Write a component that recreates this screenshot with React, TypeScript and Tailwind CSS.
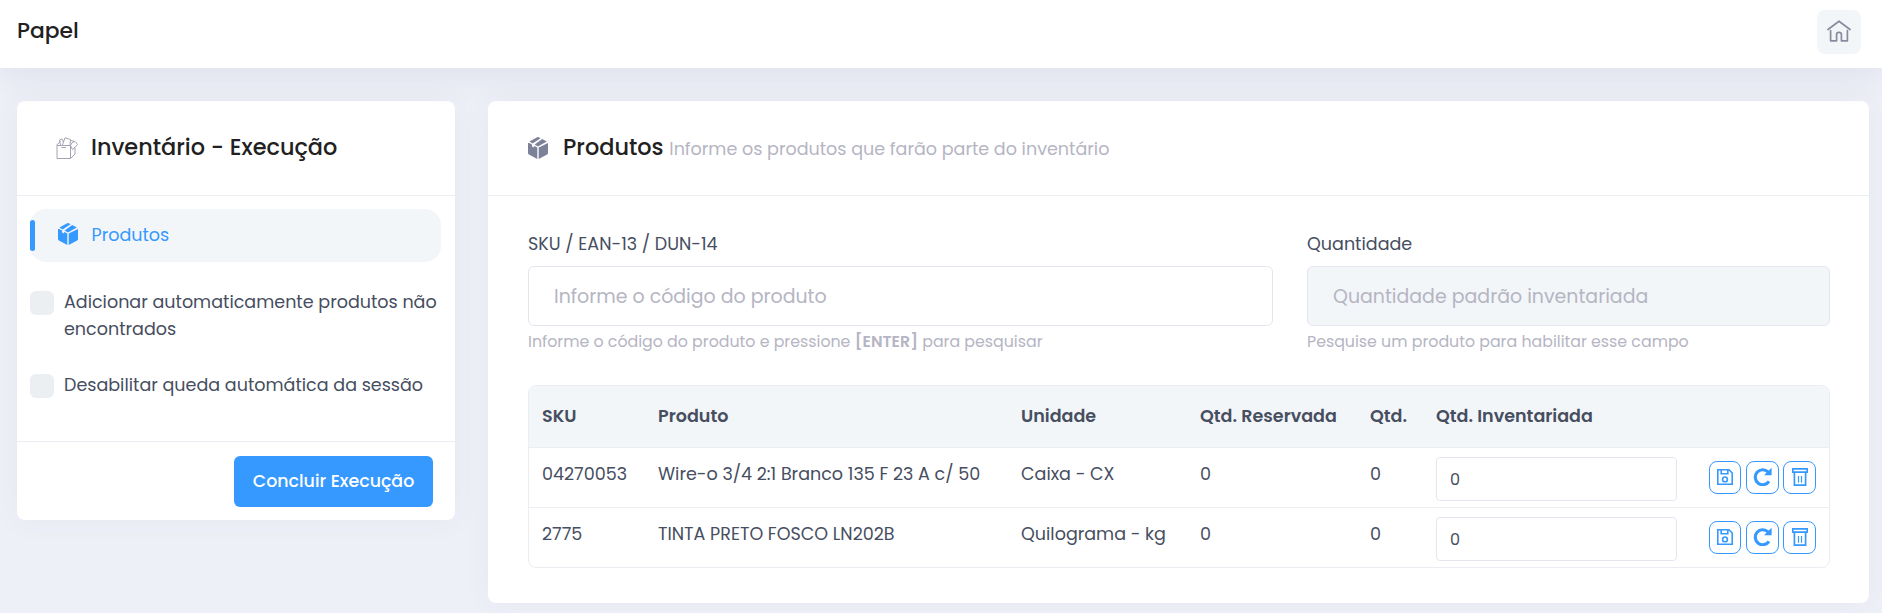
type Produto = {
  sku: string;
  nome: string;
  unidade: string;
  reservada: number;
  qtd: number;
  inventariada: number;
};

const produtos: Produto[] = [
  { sku: "04270053", nome: "Wire-o 3/4 2:1 Branco 135 F 23 A c/ 50", unidade: "Caixa - CX", reservada: 0, qtd: 0, inventariada: 0 },
  { sku: "2775", nome: "TINTA PRETO FOSCO LN202B", unidade: "Quilograma - kg", reservada: 0, qtd: 0, inventariada: 0 },
];

function BoxIcon({ className }: { className?: string }) {
  return (
    <svg viewBox="0 0 20 22" fill="currentColor" className={className}>
      <path d="M0 6 1.2 5.9 4 7.5V9.4L6.2 10.6V8.8L9.3 10.6V22L.9 17.5Q0 17 0 16Z" />
      <path d="M20 5.9V16Q20 17 19.1 17.5L10.7 22V10.6Z" />
      <path d="M1.4 4.6 9.2 .3Q10 -.1 10.8 .3L12.6 1.2 4.6 6.4Z" />
      <path d="M14.2 2 18.8 4.6 10 9.4 6.6 7.4Z" />
    </svg>
  );
}

function OpenBoxIcon({ className }: { className?: string }) {
  return (
    <svg viewBox="0 0 22 22" fill="none" stroke="currentColor" strokeWidth="0.9" className={className}>
      <path d="M1 8.5H14.5V21.5H1Z M14.5 21.5 19 17V10.5 M1 8.5 .8 7.8 4.5 4.5 M14.5 8.5 16.2 5.5 19 4.5 21.5 7.5 19 10.5 16.5 12.5 14.5 8.5 M5.5 10.5H10" />
      <path d="M4.5 8 3.5 3 6 2 7.5 5 9 .8 14.5 2.5 14 8 M7.5 5 6.5 8 M14.5 3.5 18 4.2" />
    </svg>
  );
}

function HomeIcon({ className }: { className?: string }) {
  return (
    <svg viewBox="0 0 24 22" fill="none" stroke="currentColor" strokeWidth="1.7" strokeLinecap="round" strokeLinejoin="round" className={className}>
      <path d="M1 9.5 12 1.2 23 9.5" />
      <path d="M3.6 10.5V20.8H9.6V14.6Q9.6 12.4 12 12.4T14.4 14.6V20.8H20.4V10.5" />
    </svg>
  );
}

function SaveIcon({ className }: { className?: string }) {
  return (
    <svg viewBox="0 0 16 16" fill="none" stroke="currentColor" strokeWidth="1.6" className={className}>
      <path d="M.8 .8H12L15.2 4V15.2H.8Z M4.2 .8V4.8H10.8V.8" />
      <circle cx="8" cy="10.4" r="2.4" />
    </svg>
  );
}

function ReloadIcon({ className }: { className?: string }) {
  return (
    <svg viewBox="0 0 19 19" fill="none" className={className}>
      <path d="M15 4.8A7.5 7.5 0 1 0 16 14.4" stroke="currentColor" strokeWidth="3.1" />
      <path d="M18.6 .8V8.2H11Z" fill="currentColor" />
    </svg>
  );
}

function TrashIcon({ className }: { className?: string }) {
  return (
    <svg viewBox="0 0 16 18" fill="none" stroke="currentColor" strokeWidth="1.7" className={className}>
      <path d="M.8 .8H15.2V4.2H.8Z M2.4 4.2V17.2H13.6V4.2" />
      <path d="M6.5 8V14.8 M9.5 8V14.8" strokeWidth="1.2" />
    </svg>
  );
}

function ActionButton({ children, label }: { children: React.ReactNode; label: string }) {
  return (
    <button
      aria-label={label}
      className="flex h-[33px] w-[33px] items-center justify-center rounded-lg border border-[#3699ff] text-[#3699ff] first:w-8"
    >
      {children}
    </button>
  );
}

function Checkbox({ children }: { children: React.ReactNode }) {
  return (
    <label className="flex items-start gap-[10px]">
      <span className="mt-[2px] h-6 w-6 shrink-0 rounded-md bg-[#ebeff2]" />
      <span className="whitespace-nowrap text-[17.55px] leading-[27px]">{children}</span>
    </label>
  );
}

export default function App() {
  return (
    <div className="h-[613px] overflow-hidden bg-[#eef0f8] font-['Poppins','Inter',sans-serif] text-[#464e5f]">
      <header className="relative z-10 flex h-[68px] items-center justify-between bg-white pr-[21px] pb-1 pl-[17px] shadow-[0_10px_30px_0_rgba(82,63,105,0.08)]">
        <h1 className="pb-px text-[21.8px] font-medium text-[#212121]">Papel</h1>
        <button aria-label="Início" className="flex h-11 w-11 items-center justify-center rounded-lg bg-[#f3f6f9] text-[#8a8a9f]">
          <HomeIcon className="mb-[3px] h-[22px] w-6" />
        </button>
      </header>

      <main className="flex items-start gap-[33px] pt-[33px] pr-[13px] pl-[17px]">
        <aside className="w-[438px] shrink-0 rounded-lg bg-white shadow-[0_0_30px_0_rgba(82,63,105,0.05)]">
          <div className="flex h-[95px] items-center border-b border-[#ebedf3] pl-[39px]">
            <OpenBoxIcon className="h-[22px] w-[22px] text-[#9a9aac]" />
            <h2 className="ml-[13px] text-[22.4px] font-medium text-[#212121]">Inventário - Execução</h2>
          </div>
          <div className="px-[13px] pt-[13px]">
            <div className="flex h-[53px] w-[411px] items-center rounded-2xl bg-[#f3f6f9] text-[#3699ff]">
              <span className="h-[31px] w-[5px] rounded-sm bg-[#3699ff]" />
              <BoxIcon className="mb-1 ml-[22.5px] h-[22px] w-5" />
              <span className="ml-[14px] text-[17.55px]">Produtos</span>
            </div>
            <div className="mt-[27px] space-y-[29px] pb-[42px]">
              <Checkbox>
                Adicionar automaticamente produtos não
                <br />
                encontrados
              </Checkbox>
              <Checkbox>Desabilitar queda automática da sessão</Checkbox>
            </div>
          </div>
          <div className="flex h-[79px] justify-end border-t border-[#ebedf3] pt-[14px] pr-[22px]">
            <button className="h-[51px] w-[199px] rounded-md bg-[#3699ff] text-[17.4px] font-medium text-white">
              Concluir Execução
            </button>
          </div>
        </aside>

        <section className="h-[502px] flex-1 rounded-lg bg-white shadow-[0_0_30px_0_rgba(82,63,105,0.05)]">
          <div className="flex h-[95px] items-center border-b border-[#ebedf3] pl-10">
            <BoxIcon className="h-[22px] w-5 text-[#7e8299]" />
            <h2 className="ml-[15px] text-[22.4px] font-medium text-[#212121]">
              Produtos <small className="text-[17.55px] font-normal text-[#b5b5c3]">Informe os produtos que farão parte do inventário</small>
            </h2>
          </div>

          <div className="pt-[33px] pr-[39px] pl-10">
            <div className="flex gap-[34px]">
              <div className="w-[745px]">
                <label className="block text-[17.55px] leading-[30px]">SKU / EAN-13 / DUN-14</label>
                <input
                  className="mt-[7px] block h-[60px] w-full rounded-md border border-[#e4e6ef] px-[25px] text-[18.95px] placeholder:text-[#b5b5c3]"
                  placeholder="Informe o código do produto"
                />
                <p className="mt-[4px] text-[15.8px] leading-[23px] text-[#b5b5c3]">
                  Informe o código do produto e pressione <b className="font-semibold">[ENTER]</b> para pesquisar
                </p>
              </div>
              <div className="flex-1">
                <label className="block text-[17.55px] leading-[30px]">Quantidade</label>
                <input
                  disabled
                  className="mt-[7px] block h-[60px] w-full rounded-md border border-[#e4e6ef] bg-[#f3f6f9] px-[25px] text-[18.95px] placeholder:text-[#b5b5c3]"
                  placeholder="Quantidade padrão inventariada"
                />
                <p className="mt-[4px] text-[15.8px] leading-[23px] text-[#b5b5c3]">Pesquise um produto para habilitar esse campo</p>
              </div>
            </div>

            <div className="mt-[32px] overflow-hidden rounded-lg border border-[#ebedf3]">
              <table className="w-full table-fixed text-left text-[17.55px] whitespace-nowrap">
                <colgroup>
                  <col className="w-[116px]" />
                  <col className="w-[363px]" />
                  <col className="w-[179px]" />
                  <col className="w-[170px]" />
                  <col className="w-[66px]" />
                  <col className="w-[273px]" />
                  <col />
                </colgroup>
                <thead>
                  <tr className="h-[61px] bg-[#f3f6f9]">
                    <th className="pl-[13px] font-semibold">SKU</th>
                    <th className="pl-[13px] font-semibold">Produto</th>
                    <th className="pl-[13px] font-semibold">Unidade</th>
                    <th className="pl-[13px] font-semibold">Qtd. Reservada</th>
                    <th className="pl-[13px] font-semibold">Qtd.</th>
                    <th className="pl-[13px] font-semibold">Qtd. Inventariada</th>
                    <th />
                  </tr>
                </thead>
                <tbody>
                  {produtos.map((p) => (
                    <tr key={p.sku} className="h-[60px] border-t border-[#ebedf3] align-top">
                      <td className="pt-[13px] pl-[13px]">{p.sku}</td>
                      <td className="pt-[13px] pl-[13px]">{p.nome}</td>
                      <td className="pt-[13px] pl-[13px]">{p.unidade}</td>
                      <td className="pt-[13px] pl-[13px]">{p.reservada}</td>
                      <td className="pt-[13px] pl-[13px]">{p.qtd}</td>
                      <td className="pt-[9px] pl-[13px]">
                        <input
                          defaultValue={p.inventariada}
                          className="block h-11 w-[241px] rounded border border-[#e4e6ef] px-[13px] pt-px text-[16px]"
                        />
                      </td>
                      <td className="pt-[13px] pl-[13px]">
                        <div className="flex gap-[4.5px]">
                          <ActionButton label="Salvar">
                            <SaveIcon className="h-4 w-4" />
                          </ActionButton>
                          <ActionButton label="Recarregar">
                            <ReloadIcon className="mb-px h-[19px] w-[19px]" />
                          </ActionButton>
                          <ActionButton label="Excluir">
                            <TrashIcon className="mb-px h-[18px] w-4" />
                          </ActionButton>
                        </div>
                      </td>
                    </tr>
                  ))}
                </tbody>
              </table>
            </div>
          </div>
        </section>
      </main>
    </div>
  );
}
